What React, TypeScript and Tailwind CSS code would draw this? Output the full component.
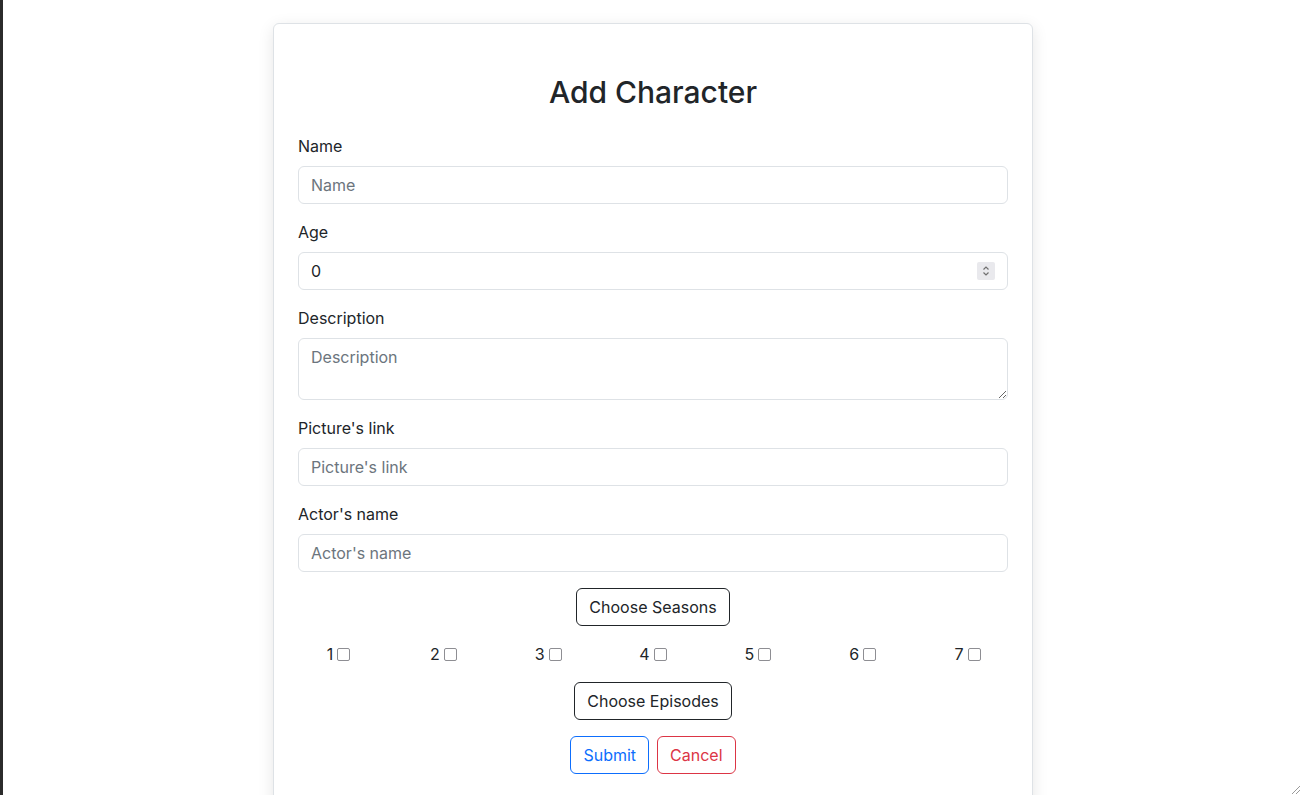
import React from "react";

const font = { fontFamily: "Inter, 'Noto Sans', sans-serif" };

function Field({ label, placeholder }: { label: string; placeholder: string }) {
  return (
    <div className="mb-4">
      <label className="mb-2 block text-[16px] leading-6 text-[#212529]">{label}</label>
      <input
        type="text"
        placeholder={placeholder}
        className="block h-[38px] w-full rounded-[6px] border border-[#dee2e6] bg-white px-3 py-[6px] text-[16px] leading-6 text-[#212529] outline-none placeholder:text-[#6c757d]"
      />
    </div>
  );
}

export default function App() {
  const seasons = [1, 2, 3, 4, 5, 6, 7];
  return (
    <div className="relative flex min-h-screen justify-center border-l-[3px] border-[#2b2b2b] bg-white pl-[2px]" style={font}>
      <div className="w-[760px] pt-[23px]">
        <div className="rounded-[6px] border border-[#dee2e6] bg-white px-6 pb-10 pt-6 shadow-[0_4px_16px_rgba(0,0,0,0.10)]">
          <h2 className="mb-[23px] mt-[25px] text-center text-[30px] font-medium leading-[38px] text-[#212529]">
            Add Character
          </h2>
          <Field label="Name" placeholder="Name" />
          <div className="mb-4">
            <label className="mb-2 block text-[16px] leading-6 text-[#212529]">Age</label>
            <div className="flex h-[38px] w-full items-center justify-between rounded-[6px] border border-[#dee2e6] bg-white pl-3 pr-3">
              <span className="text-[16px] leading-6 text-[#212529]">0</span>
              <span className="flex h-[18px] w-[18px] items-center justify-center rounded-[2px] bg-[#e9e9ed]">
                <svg width="10" height="12" viewBox="0 0 10 12" fill="none" stroke="#707070" strokeWidth="1.2">
                  <path d="M2.5 4.5 L5 2 L7.5 4.5" />
                  <path d="M2.5 7.5 L5 10 L7.5 7.5" />
                </svg>
              </span>
            </div>
          </div>
          <div className="mb-4">
            <label className="mb-2 block text-[16px] leading-6 text-[#212529]">Description</label>
            <textarea
              rows={2}
              placeholder="Description"
              className="block h-[62px] w-full resize-y rounded-[6px] border border-[#dee2e6] bg-white px-3 py-[6px] text-[16px] leading-6 text-[#212529] outline-none placeholder:text-[#6c757d]"
            />
          </div>
          <Field label="Picture's link" placeholder="Picture's link" />
          <Field label="Actor's name" placeholder="Actor's name" />
          <div className="flex justify-center">
            <button className="h-[38px] rounded-[6px] border border-[#212529] bg-white px-3 text-[16px] leading-6 text-[#212529]">
              Choose Seasons
            </button>
          </div>
          <div className="-mx-3 my-4 grid grid-cols-7">
            {seasons.map((s) => (
              <div key={s} className="flex items-center justify-center gap-1 text-[16px] leading-6 text-[#212529]">
                <span>{s}</span>
                <span className="mt-[1px] box-border block h-[13px] w-[13px] shrink-0 rounded-[2px] border-[1.5px] border-[#8e8e93] bg-white" />
              </div>
            ))}
          </div>
          <div className="flex justify-center">
            <button className="h-[38px] rounded-[6px] border border-[#212529] bg-white px-3 text-[16px] leading-6 text-[#212529]">
              Choose Episodes
            </button>
          </div>
          <div className="mt-4 flex justify-center gap-2">
            <button className="h-[38px] rounded-[6px] border border-[#0d6efd] bg-white px-3 text-[16px] leading-6 text-[#0d6efd]">
              Submit
            </button>
            <button className="h-[38px] rounded-[6px] border border-[#dc3545] bg-white px-3 text-[16px] leading-6 text-[#dc3545]">
              Cancel
            </button>
          </div>
        </div>
      </div>
      <svg className="fixed bottom-0 right-0" width="12" height="12" viewBox="0 0 12 12" stroke="#9a9a9a" strokeWidth="1">
        <path d="M11 3 L3 11" />
        <path d="M11 7 L7 11" />
      </svg>
    </div>
  );
}
